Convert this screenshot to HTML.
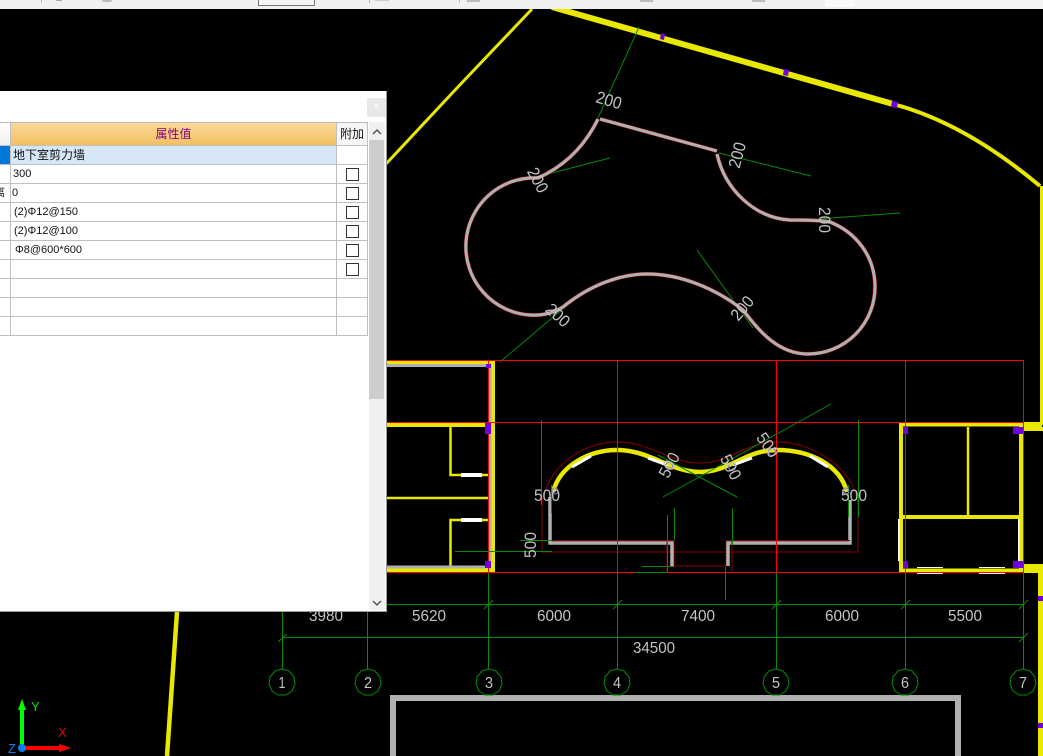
<!DOCTYPE html>
<html><head><meta charset="utf-8"><style>
html,body{margin:0;padding:0;background:#000;width:1043px;height:756px;overflow:hidden}
#cad{position:absolute;left:0;top:0}
#tb{position:absolute;left:0;top:0;width:1043px;height:9px;background:#f0f0f0;overflow:hidden}
#tb i{position:absolute;display:block}
#dlg{position:absolute;left:0;top:91px;width:387px;height:521px;background:#fff;border-right:1px solid #999;border-bottom:1px solid #999;box-sizing:border-box;font:11px "Liberation Sans","WenQuanYi Zen Hei","Noto Sans CJK SC",sans-serif;color:#111}
#cl{position:absolute;left:367px;top:7px;width:19px;height:19px;background:#e8e8e8;color:#fff;text-align:center;line-height:18px;font-size:10px}
.hl,.vl{position:absolute;background:#c0c0c0}
.hl{left:0;width:368px;height:1px}
.vl{top:31px;width:1px;height:213px}
.t{position:absolute;left:13px;white-space:nowrap;line-height:19px;height:19px}
.c{position:absolute;left:346px;width:11px;height:11px;border:1px solid #333;background:#fff}
#sb{position:absolute;left:369px;top:31px;width:16px;height:488px;background:#f0f0f0}
#th{position:absolute;left:369px;top:49px;width:15px;height:259px;background:#cdcdcd}
</style></head><body>
<svg id="cad" width="1043" height="756" viewBox="0 0 1043 756" xmlns="http://www.w3.org/2000/svg" font-family="Liberation Sans, sans-serif">
<g fill="none" stroke-linejoin="round">
<!-- site outline -->
<path d="M532,9 L456,89 L385,165" stroke="#e8e800" stroke-width="3"/>
<path d="M552,7 L893,104" stroke="#e8e800" stroke-width="6"/>
<path d="M893,104 C935,115 985,140 1040,186" stroke="#e8e800" stroke-width="4"/>
<path d="M1041.500,186 V422" stroke="#e8e800" stroke-width="3"/>
<path d="M177,612 L167,756" stroke="#e8e800" stroke-width="4.500"/>
<!-- gray bottom rect -->
<path d="M393,756 V698 H958 V756" stroke="#b0b0b0" stroke-width="6" stroke-linejoin="miter"/>
<!-- green leaders upper -->
<g stroke="#078a07" stroke-width="1">
<path d="M639,27 L598,118"/><path d="M610,158 L517,182"/><path d="M719,153 L811,176"/>
<path d="M900,213 L804,220"/><path d="M697,250 L753,328"/><path d="M565,307 L500,362"/>
</g>
<!-- upper curved wall -->
<path d="M598,119 Q578,160 538,178 A68,68.500 0 1 0 530,315 C545,316 555,312 563,307 C590,285 620,274 647,274 C680,274 715,288 743,310 C755,325 775,354 808,354 A67,67 0 0 0 875,287 C875,255 855,232 830,222 C820,220 800,220 790,220 C755,218 725,190 717,154" stroke="#900000" stroke-width="4.200"/>
<path d="M600,119 L717,151" stroke="#900000" stroke-width="4.200"/>
<path d="M598,119 Q578,160 538,178 A68,68.500 0 1 0 530,315 C545,316 555,312 563,307 C590,285 620,274 647,274 C680,274 715,288 743,310 C755,325 775,354 808,354 A67,67 0 0 0 875,287 C875,255 855,232 830,222 C820,220 800,220 790,220 C755,218 725,190 717,154" stroke="#b0b0b0" stroke-width="3.200"/>
<path d="M600,119 L717,151" stroke="#b0b0b0" stroke-width="3.200"/>
<!-- dark red lower -->
<g stroke="#8b0000" stroke-width="1">
<path d="M542,552 V505 C545,470 580,442 617,442 C650,442 670,463 700,463 C730,463 745,442 777,442 C815,442 855,470 858,505 V552 H542"/>
<path d="M667,552 V572 M732,552 V572 M674,543 V566 H726 V543"/>
</g>
<!-- gray lower -->
<path d="M550,497 V543 H672 V566 M728,566 V543 H850 V500" stroke="#b0b0b0" stroke-width="3.500" stroke-linejoin="miter"/>
<path d="M550,540.500 H675 M725,540.500 H850 M667,540 V552 M732,540 V552" stroke="#8b0000" stroke-width="1"/>
<!-- yellow arc -->
<path d="M553,492 C560,465 590,450 617,450 C650,450 670,472 700,472 C730,472 745,450 777,450 C810,450 840,465 847,492" stroke="#e8e800" stroke-width="4.500"/>
<g stroke="#fff" stroke-width="3">
<path d="M572,467 L591,456 M648,458 L667,465 M733,465 L752,458 M810,456 L828,467"/>
</g>
<!-- yellow rooms left -->
<g stroke="#e8e800" stroke-linejoin="miter">
<path d="M387,362 H491" stroke-width="4"/>
<path d="M493,361 V572" stroke-width="4"/>
<path d="M387,425 H487" stroke-width="4"/>
<path d="M450.500,427 V475 H491" stroke-width="2.500"/>
<path d="M387,498 H490" stroke-width="2.500"/>
<path d="M450.500,568 V520 H491" stroke-width="2.500"/>
<path d="M387,570 H495" stroke-width="4"/>
<!-- right room -->
<path d="M901,423 V570.500 H1021 V424.500 H899" stroke-width="4"/>
<path d="M968,427 V515" stroke-width="2.500"/>
<path d="M903,517 H1019" stroke-width="4"/>
</g>
<g stroke="#b0b0b0" stroke-width="3"><path d="M387,365.500 H486 M490,366 V561 M387,567 H486"/></g>
<g fill="#fff" stroke="none">
<rect x="461" y="473" width="21" height="4"/><rect x="461" y="518" width="21" height="4"/>
<rect x="898" y="519" width="1.500" height="42"/><rect x="1018" y="519" width="1.500" height="42"/>
<rect x="917" y="567" width="26" height="1"/><rect x="917" y="573" width="26" height="1"/>
<rect x="979" y="567" width="26" height="1"/><rect x="979" y="573" width="26" height="1"/>
</g>
<g fill="#e8e800" stroke="none">
<rect x="1023" y="422" width="20" height="9"/><rect x="1023" y="564" width="20" height="9"/>
<rect x="1038" y="573" width="5" height="183"/>
</g>
<rect x="1042" y="425" width="1" height="2" fill="#000" stroke="none"/>
<!-- red grid -->
<g stroke="#f00" stroke-width="1">
<path d="M387,360.500 H1023.500 M387,422.500 H1023.500 M387,572.500 H1023.500"/>
<path d="M488.500,360 V573 M617.500,360 V573 M776.500,360 V573 M905.500,360 V573 M1023.500,360 V573"/>
</g>
<!-- purple -->
<g fill="#7000e0" stroke="none">
<rect x="486" y="364" width="5" height="4"/><rect x="485" y="423" width="6" height="11"/><rect x="485" y="561" width="6" height="7"/>
<rect x="903" y="427" width="5" height="7"/><rect x="1013" y="427" width="10" height="7"/>
<rect x="903" y="561" width="5" height="7"/><rect x="1013" y="561" width="10" height="7"/>
<rect x="1038" y="596" width="5" height="5"/><rect x="1038" y="723" width="5" height="5"/>
<path d="M661,33 L665,34 L664,40 L660,39Z M784,69 L789,70 L788,76 L783,75Z M892,101 L898,102 L897,108 L891,107Z"/>
</g>
<!-- green lower -->
<g stroke="#078a07" stroke-width="1">
<path d="M541.500,420 V505 M858.500,420 V517 M520,540.500 H552 M455,551.500 H552"/>
<path d="M663,497 L831,404 M658,455 L737,497"/>
<path d="M667.500,515 V572 M674.500,508 V540 M732.500,508 V545 M642,566.500 H674 M636,572.500 H667 M725.500,567 V600"/>
<path d="M551.500,485 V513 M848.500,485 V517"/>
<!-- axis lines -->
<path d="M282.500,612 V669 M367.500,612 V669 M488.500,573 V669 M617.500,573 V669 M776.500,573 V669 M905.500,573 V669 M1023.500,573 V669"/>
<path d="M282,637.500 H1024 M387,604.500 H1024"/>
<path d="M278,642 L287,634 M484,609 L493,600 M613,609 L622,600 M772,609 L781,600 M901,609 L910,600 M1019,609 L1028,600 M1019,642 L1028,633"/>
</g>
<g stroke="#078a07" stroke-width="1">
<polygon points="282,669 289,671 294,677 295,684 292,691 286,695 278,695 272,691 269,684 270,677 275,671"/>
<polygon points="368,669 375,671 380,677 381,684 378,691 372,695 364,695 358,691 355,684 356,677 361,671"/>
<polygon points="489,669 496,671 501,677 502,684 499,691 493,695 485,695 479,691 476,684 477,677 482,671"/>
<polygon points="617,669 624,671 629,677 630,684 627,691 621,695 613,695 607,691 604,684 605,677 610,671"/>
<polygon points="776,669 783,671 788,677 789,684 786,691 780,695 772,695 766,691 763,684 764,677 769,671"/>
<polygon points="905,669 912,671 917,677 918,684 915,691 909,695 901,695 895,691 892,684 893,677 898,671"/>
<polygon points="1023,669 1030,671 1035,677 1036,684 1033,691 1027,695 1019,695 1013,691 1010,684 1011,677 1016,671"/>
</g>
<!-- small circles -->
<g stroke="#7a7ad0" stroke-width="1">
<circle cx="669" cy="466" r="3.500"/><circle cx="732" cy="467" r="3.500"/><circle cx="772" cy="452" r="3.500"/><circle cx="555" cy="491" r="3"/><circle cx="846" cy="491" r="3"/>
</g>
<!-- UCS -->
<path d="M22,747 V706" stroke="#00ff00" stroke-width="4"/>
<path d="M22,748 H62" stroke="#ff0000" stroke-width="4"/>
</g>
<path d="M22,699 L18,710 H26Z" fill="#00ff00"/>
<path d="M71,748 L59,744 V752Z" fill="#ff0000"/>
<circle cx="22" cy="748" r="4" fill="#0a7cf0"/>
<g font-size="13">
<text x="31" y="711" fill="#00e000">Y</text>
<text x="58" y="737" fill="#e00000">X</text>
<text x="8" y="753" fill="#0a7cf0">Z</text>
</g>
<!-- text -->
<g fill="#c4c4c4" font-size="16" text-anchor="middle">
<text x="326" y="621" textLength="34" lengthAdjust="spacingAndGlyphs">3980</text><text x="429" y="621" textLength="34" lengthAdjust="spacingAndGlyphs">5620</text><text x="554" y="621" textLength="34" lengthAdjust="spacingAndGlyphs">6000</text>
<text x="698" y="621" textLength="34" lengthAdjust="spacingAndGlyphs">7400</text><text x="842" y="621" textLength="34" lengthAdjust="spacingAndGlyphs">6000</text><text x="965" y="621" textLength="34" lengthAdjust="spacingAndGlyphs">5500</text>
<text x="654" y="653" textLength="42" lengthAdjust="spacingAndGlyphs">34500</text>
<g font-size="16">
<text x="282" y="688" textLength="7" lengthAdjust="spacingAndGlyphs">1</text><text x="368" y="688" textLength="8" lengthAdjust="spacingAndGlyphs">2</text><text x="489" y="688" textLength="8" lengthAdjust="spacingAndGlyphs">3</text><text x="617" y="688" textLength="8" lengthAdjust="spacingAndGlyphs">4</text><text x="776" y="688" textLength="8" lengthAdjust="spacingAndGlyphs">5</text><text x="905" y="688" textLength="8" lengthAdjust="spacingAndGlyphs">6</text><text x="1023" y="688" textLength="8" lengthAdjust="spacingAndGlyphs">7</text>
</g>
<g font-size="17">
<text transform="translate(609,100) rotate(16)" y="6" textLength="26" lengthAdjust="spacingAndGlyphs">200</text>
<text transform="translate(737,155) rotate(-75)" y="6" textLength="26" lengthAdjust="spacingAndGlyphs">200</text>
<text transform="translate(825,220) rotate(90)" y="6" textLength="26" lengthAdjust="spacingAndGlyphs">200</text>
<text transform="translate(538,180) rotate(62)" y="6" textLength="26" lengthAdjust="spacingAndGlyphs">200</text>
<text transform="translate(742,308) rotate(-50)" y="6" textLength="26" lengthAdjust="spacingAndGlyphs">200</text>
<text transform="translate(558,315) rotate(42)" y="6" textLength="26" lengthAdjust="spacingAndGlyphs">200</text>
<text x="547" y="501" textLength="26" lengthAdjust="spacingAndGlyphs">500</text>
<text x="854" y="501" textLength="26" lengthAdjust="spacingAndGlyphs">500</text>
<text transform="translate(530,545) rotate(-90)" y="6" textLength="26" lengthAdjust="spacingAndGlyphs">500</text>
<text transform="translate(669,465) rotate(-62)" y="6" textLength="26" lengthAdjust="spacingAndGlyphs">500</text>
<text transform="translate(731,467) rotate(62)" y="6" textLength="26" lengthAdjust="spacingAndGlyphs">500</text>
<text transform="translate(768,445) rotate(55)" y="6" textLength="26" lengthAdjust="spacingAndGlyphs">500</text>
</g>
</g>
</svg>
<div id="tb">
<i style="left:41px;top:0;width:1px;height:3px;background:#bbb"></i>
<i style="left:56px;top:0;width:6px;height:1px;background:#aaa"></i>
<i style="left:102px;top:0;width:10px;height:2px;background:#bbb;border-radius:0 0 5px 5px"></i>
<i style="left:258px;top:0;width:55px;height:5px;border:1px solid #777;border-top:none;background:#f4f4f4"></i>
<i style="left:369px;top:0;width:1px;height:3px;background:#bbb"></i>
<i style="left:375px;top:0;width:14px;height:1px;background:#ccc"></i>
<i style="left:459px;top:0;width:1px;height:3px;background:#bbb"></i>
<i style="left:467px;top:0;width:13px;height:2px;background:#bbb"></i>
<i style="left:640px;top:0;width:13px;height:2px;background:#bbb"></i>
<i style="left:752px;top:0;width:13px;height:2px;background:#bbb"></i>
<i style="left:825px;top:0;width:30px;height:7px;background:#f8f8f8"></i>
<i style="left:855px;top:0;width:188px;height:9px;background:#f3f3f3"></i>
</div>
<div id="dlg">
<div id="cl">x</div>
<div class="hl" style="top:31px;background:#b8b8b8;height:1px"></div>
<div style="position:absolute;left:0;top:32px;width:10px;height:22px;background:linear-gradient(#fff,#f0f0f0)"></div>
<div style="position:absolute;left:11px;top:32px;width:325px;height:22px;background:linear-gradient(#fbd998,#f2c060);color:#800080;text-align:center;line-height:22px;font-size:12px">属性值</div>
<div style="position:absolute;left:337px;top:32px;width:30px;height:22px;text-align:center;line-height:22px;font-size:12px;background:#f6f6f6">附加</div>
<div style="position:absolute;left:0;top:55px;width:10px;height:18px;background:#0078d7"></div>
<div style="position:absolute;left:11px;top:55px;width:325px;height:18px;background:#d6e8f7"></div>
<div class="hl" style="top:54px"></div><div class="hl" style="top:73px"></div><div class="hl" style="top:92px"></div><div class="hl" style="top:111px"></div><div class="hl" style="top:130px"></div><div class="hl" style="top:149px"></div><div class="hl" style="top:168px"></div><div class="hl" style="top:187px"></div><div class="hl" style="top:206px"></div><div class="hl" style="top:225px"></div><div class="hl" style="top:244px"></div>
<div class="vl" style="left:10px"></div><div class="vl" style="left:336px"></div><div class="vl" style="left:367px"></div>
<div class="t" style="top:55px;font-size:12px">地下室剪力墙</div>
<div class="t" style="top:74px">300</div>
<div class="t" style="top:93px;left:12px">0</div>
<div class="t" style="top:112px;left:14px">(2)Φ12@150</div>
<div class="t" style="top:131px;left:14px">(2)Φ12@100</div>
<div class="t" style="top:150px;left:15px">Φ8@600*600</div>
<div style="position:absolute;left:0;top:93px;width:5px;height:18px;overflow:hidden;line-height:19px;font-size:11px"><span style="position:absolute;right:0;white-space:nowrap">距离</span></div>
<div class="c" style="top:77px"></div><div class="c" style="top:96px"></div><div class="c" style="top:115px"></div><div class="c" style="top:134px"></div><div class="c" style="top:153px"></div><div class="c" style="top:172px"></div>
<div id="sb"></div><div id="th"></div>
<svg style="position:absolute;left:371px;top:36px" width="12" height="10"><path d="M2,7 L6,3 L10,7" fill="none" stroke="#555" stroke-width="1.500"/></svg>
<svg style="position:absolute;left:371px;top:507px" width="12" height="10"><path d="M2,3 L6,7 L10,3" fill="none" stroke="#555" stroke-width="1.500"/></svg>
</div>
</body></html>
